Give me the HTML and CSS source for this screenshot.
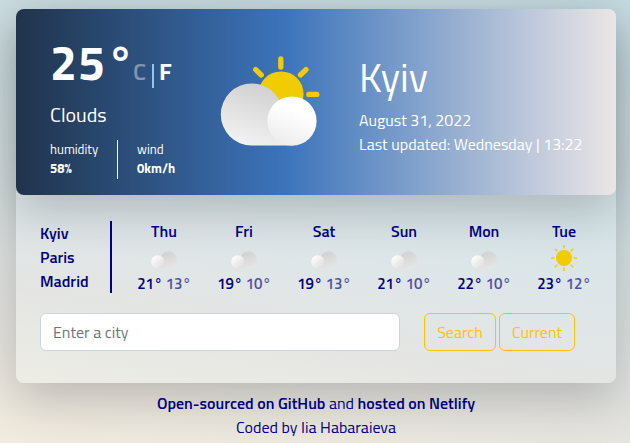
FILE: index.html
```html
<!DOCTYPE html>
<html lang="en">
<head>
<meta charset="utf-8">
<title>Weather</title>
<link rel="stylesheet" href="styles.css">
</head>
<body>
<svg class="defs" width="0" height="0" aria-hidden="true">
  <defs>
    <linearGradient id="back" x1="0.65" y1="0" x2="0.3" y2="1"><stop offset="0" stop-color="#cfcfcf"/><stop offset="1" stop-color="#f3f3f3"/></linearGradient>
    <linearGradient id="front" x1="0.7" y1="0" x2="0.3" y2="1"><stop offset="0.3" stop-color="#fff"/><stop offset="1" stop-color="#ececec"/></linearGradient>
    <linearGradient id="smallBack" x1="0.3" y1="0" x2="0.7" y2="1"><stop offset="0" stop-color="#d0d0d0"/><stop offset="1" stop-color="#e6e6e6"/></linearGradient>
    <linearGradient id="smallFront" x1="0.1" y1="0.1" x2="0.9" y2="0.9"><stop offset="0" stop-color="#fff"/><stop offset="1" stop-color="#dedede"/></linearGradient>
    <symbol id="clouds" viewBox="0 0 26 18"><path d="M7 17.4V10L9.3 6.2A8.5 8.5 0 1 1 17.2 17.4Z" fill="url(#smallBack)"/><circle cx="6.8" cy="10.8" r="6.6" fill="url(#smallFront)"/></symbol>
  </defs>
</svg>
<main class="app">
  <section class="current">
    <div class="now">
      <div class="temperature"><strong>25</strong><b class="degree">°</b><span class="units"><span class="celsius">C</span><i></i><span class="fahrenheit">F</span></span></div>
      <div class="description">Clouds</div>
      <div class="details">
        <div class="humidity"><span>humidity</span><br><b>58%</b></div>
        <div class="wind"><span>wind</span><br><b>0km/h</b></div>
      </div>
    </div>
    <svg class="weather-icon" viewBox="0 0 140 140">
      <circle cx="71" cy="64" r="22.6" fill="#f0cc00"/>
      <path d="M70.8 29v8M45.7 39.6l5.6 5.4M96 39.6 90.4 45M98.8 64.4h8" stroke="#f0cc00" stroke-width="5.3" stroke-linecap="round"/>
      <path d="M41.8 115.5A31 31 0 1 1 72.8 84.5L84 115.5Z" fill="url(#back)"/>
      <circle cx="82" cy="91" r="24.6" fill="url(#front)"/>
    </svg>
    <div class="place">
      <h1>Kyiv</h1>
      <p>August 31, 2022</p>
      <p>Last updated: Wednesday | 13:22</p>
    </div>
  </section>
  <section class="lower">
    <div class="forecast-row">
      <nav class="cities"><a>Kyiv</a><a>Paris</a><a>Madrid</a></nav>
      <div class="forecast">
        <div class="day"><b>Thu</b><svg><use href="#clouds"/></svg><p>21° <span>13°</span></p></div>
        <div class="day"><b>Fri</b><svg><use href="#clouds"/></svg><p>19° <span>10°</span></p></div>
        <div class="day"><b>Sat</b><svg><use href="#clouds"/></svg><p>19° <span>13°</span></p></div>
        <div class="day"><b>Sun</b><svg><use href="#clouds"/></svg><p>21° <span>10°</span></p></div>
        <div class="day"><b>Mon</b><svg><use href="#clouds"/></svg><p>22° <span>10°</span></p></div>
        <div class="day"><b>Tue</b><svg class="sun" viewBox="0 0 26 26"><circle cx="13" cy="13" r="8" fill="#f0cc00"/><path d="M13 0v3.6M13 22.4V26M0 13h3.6M22.4 13H26M3.8 3.8l2.5 2.5M19.7 19.7l2.5 2.5M3.8 22.2l2.5-2.5M19.7 6.3l2.5-2.5" stroke="#edca25" stroke-width="1.6"/></svg><p>23° <span>12°</span></p></div>
      </div>
    </div>
    <form class="search">
      <input type="text" placeholder="Enter a city">
      <button type="button" class="find">Search</button>
      <button type="button" class="locate">Current</button>
    </form>
  </section>
</main>
<footer><div class="sources"><b>Open-sourced on GitHub</b> and <b>hosted on Netlify</b></div><div class="author">Coded by Iia Habaraieva</div></footer>
</body>
</html>
```
FILE: styles.css
```css
* { box-sizing: border-box; }
body {
  margin: 0;
  height: 443px;
  padding: 9px 14px 0 16px;
  overflow: hidden;
  font: 16px/24px "Titillium Web", "Noto Sans", sans-serif;
  color: #000080;
  background: linear-gradient(190deg, #c6dce3 0%, #d2e0e3 40%, #e2e2df 75%, #f2ebde 100%);
}
p, h1 { margin: 0; }
.defs { display: block; position: absolute; }
.app {
  height: 374px;
  border-radius: 8px;
  background: linear-gradient(190deg, #d6e4e8 45%, #dfe6e8 65%, #e4e5e3 80%, #edede5 100%);
  box-shadow: 0 16px 48px rgba(0,0,0,.2);
}
.current {
  display: flex;
  height: 186px;
  border-radius: 8px;
  color: #fff;
  background: linear-gradient(to right, #20334b 0%, #3c74bb 45%, #ebe6e6 100%);
  box-shadow: 0 16px 48px rgba(0,0,0,.2);
}
.now { width: 188px; padding: 22px 0 0 34px; }
.temperature { display: flex; height: 66px; line-height: 64px; font-size: 48px; align-items: baseline; }
.temperature strong { width: 60px; font-weight: 700; letter-spacing: 1px; }
.degree { width: 24px; font-weight: 700; margin-left: -3px; }
.units { display: flex; align-items: baseline; font-size: 24px; font-weight: 600; margin-left: 2px; }
.celsius { color: #8095ae; width: 19px; }
.units i { width: 2px; height: 24px; background: #8fcaec; align-self: center; position: relative; top: 5px; }
.fahrenheit { margin-left: 5px; font-weight: 700; }
.description { margin-top: 6px; font-size: 20px; line-height: 24px; }
.details { display: flex; margin-top: 13px; font-size: 13px; line-height: 19px; height: 39px; }
.humidity { width: 68px; border-right: 1px solid #fff; }
.wind { padding-left: 19px; }
.weather-icon { width: 140px; height: 140px; margin: 21px 0 0 6px; }
.place { padding: 45px 0 0 9px; white-space: nowrap; }
h1 { font-size: 40px; line-height: 48px; font-weight: 400; margin-bottom: 6px; }
.lower { height: 188px; padding: 24px; border-radius: 0 0 8px 8px; }
.forecast-row { display: flex; height: 76px; }
.cities { display: flex; flex-direction: column; flex-shrink: 0; width: 72px; height: 72px; margin-top: 2px; border-right: 2px solid #000080; font-weight: 600; }
.forecast { display: flex; flex-shrink: 0; margin-left: 12px; }
.day { width: 80px; text-align: center; }
.day b { display: block; font-weight: 600; height: 24px; }
.day svg { display: block; width: 26px; height: 18px; margin: 8px auto 3px; }
.day svg.sun { height: 26px; margin: 2px auto 1px; }
.day p { font-size: 15px; white-space: nowrap; font-weight: 600; }
.day span { opacity: .65; }
.search { display: flex; margin: 18px 0 0; height: 38px; }
input, button { font: inherit; border-radius: 6px; height: 38px; margin: 0; }
input { width: 360px; margin-right: 24px; padding: 6px 12px; border: 1px solid #ced4da; background: #fff; }
input::placeholder { color: #6c757d; opacity: 1; }
button { color: #ffc107; background: transparent; border: 1px solid #ffc107; padding: 0; }
.find { width: 72px; margin-right: 3px; }
.locate { width: 76px; }
footer { margin-top: 8px; text-align: center; }
footer b { font-weight: 600; }
```
